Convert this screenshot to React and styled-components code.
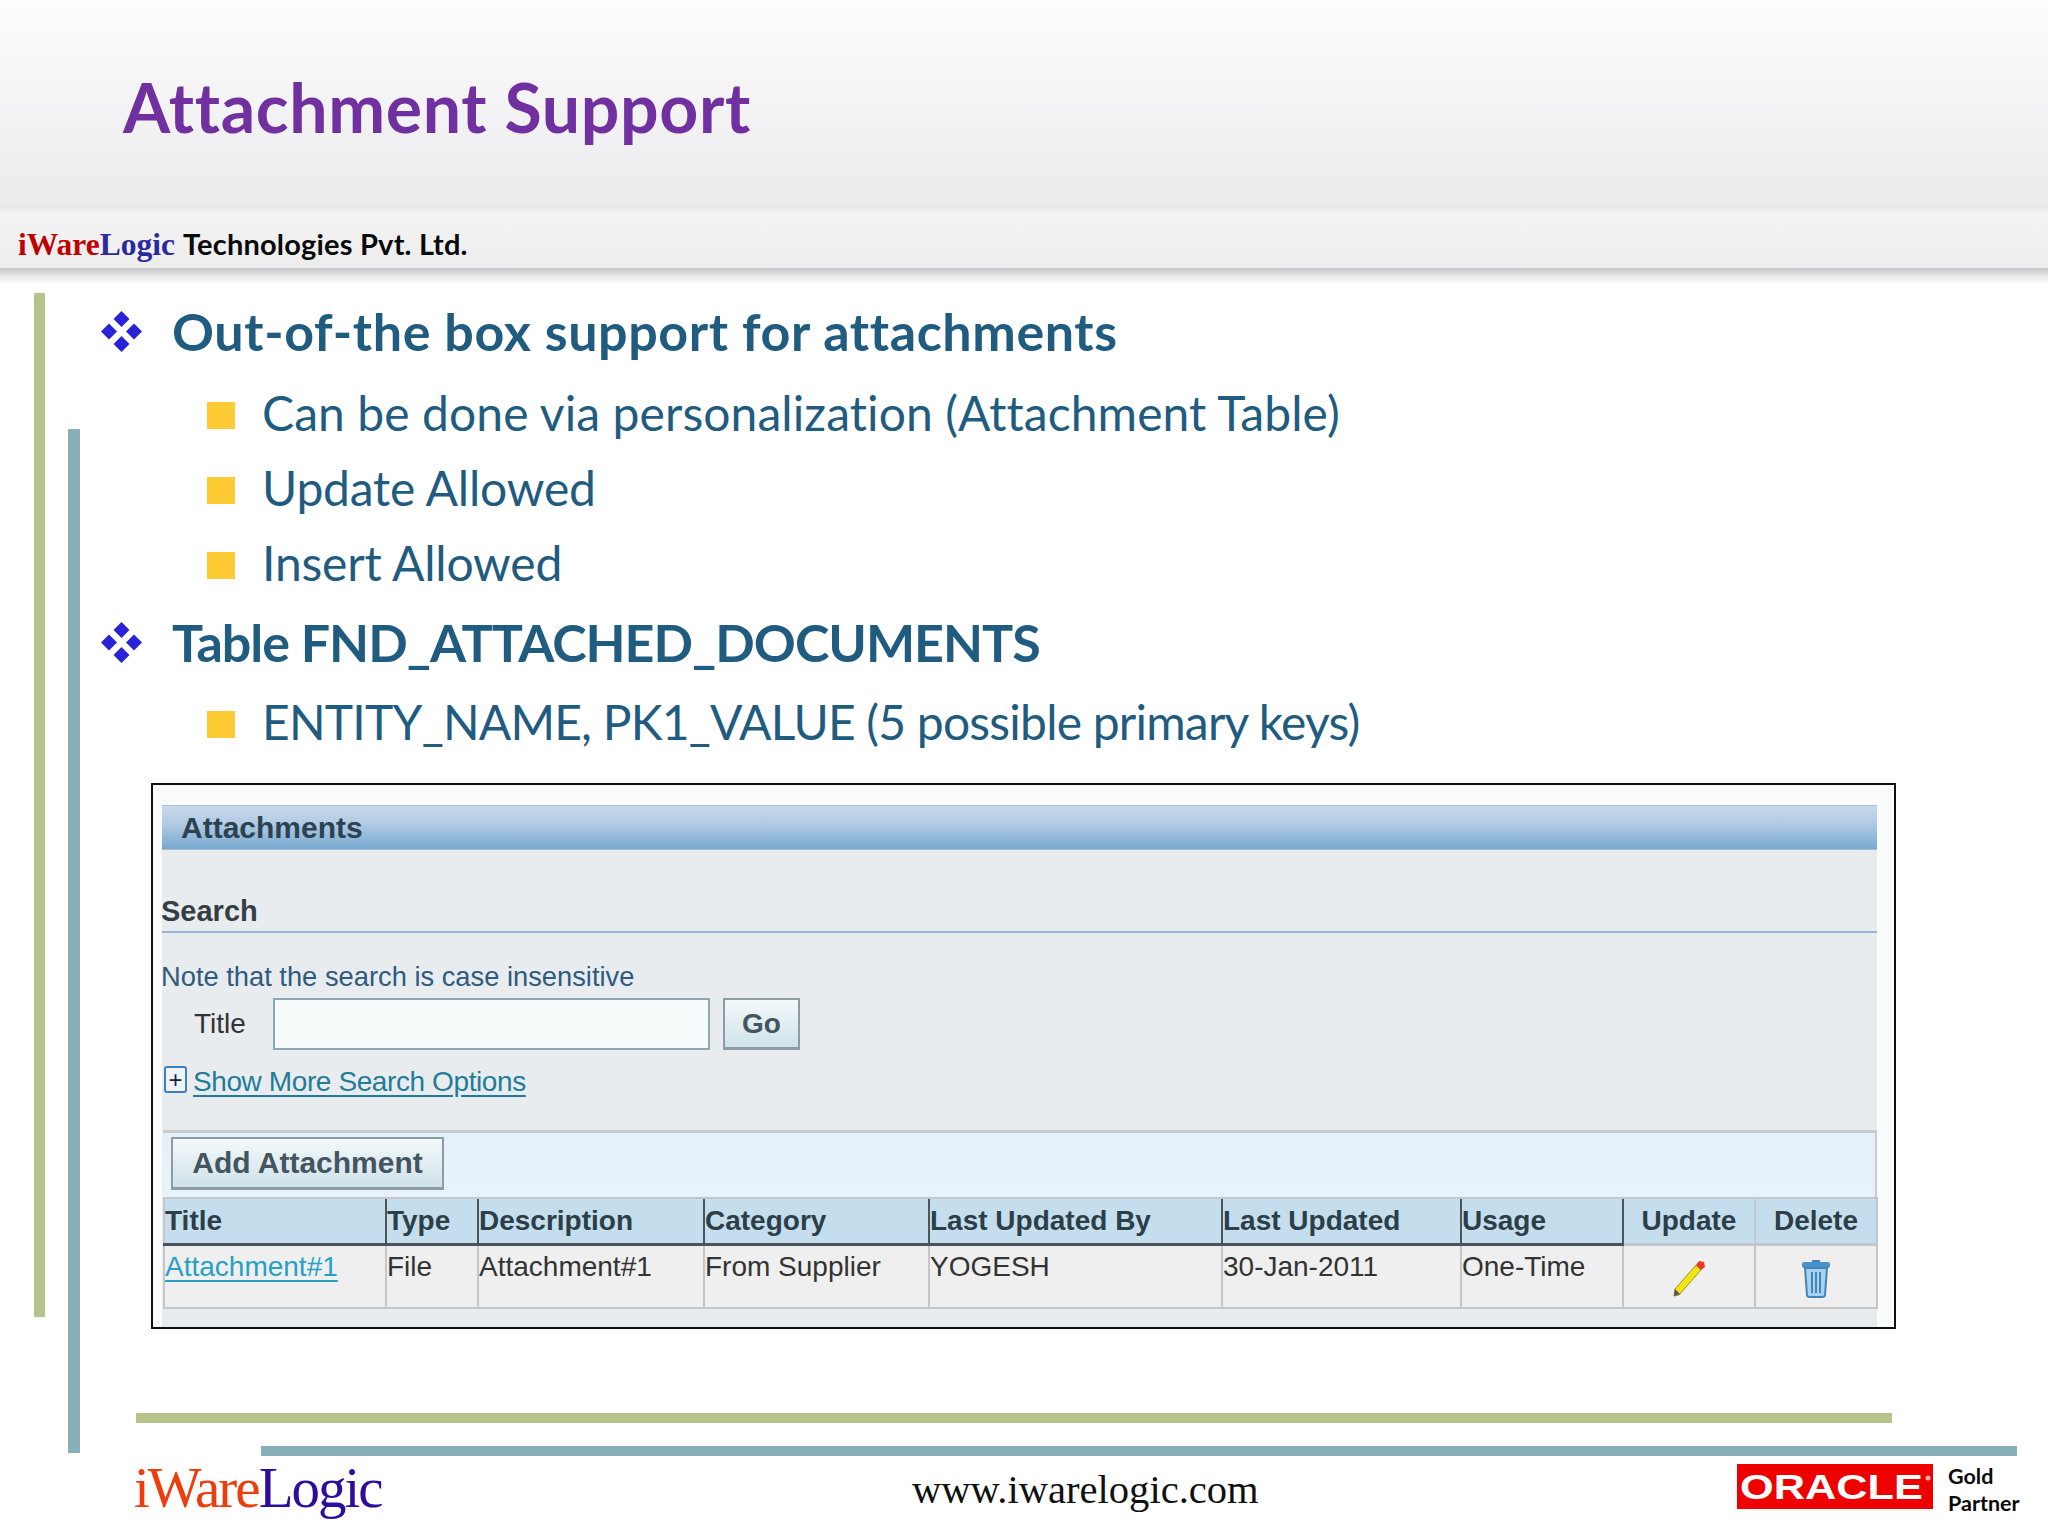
import React from 'react';
import styled, { createGlobalStyle } from 'styled-components';

const GlobalStyle = createGlobalStyle`
  html, body {
    margin: 0;
    padding: 0;
    background: #fff;
  }
`;

const SLIDE_FONT = '"Lato", "Open Sans", sans-serif';
const FORM_FONT = '"Liberation Sans", Arial, sans-serif';
const SERIF_FONT = '"Liberation Serif", "Times New Roman", serif';

const Slide = styled.div`
  width: 2048px;
  height: 1536px;
  overflow: hidden;
  display: flex;
  flex-direction: column;
  background: #fff;
`;

const TitleBand = styled.header`
  height: 205px;
  box-sizing: border-box;
  padding: 66px 0 0 123px;
  background: linear-gradient(#fdfdfd, #f6f6f7 35%, #ebebed);
`;

const Title = styled.h1`
  margin: 0;
  font: 700 68px/82px ${SLIDE_FONT};
  letter-spacing: 0.65px;
  color: #7030a0;
`;

const BrandStrip = styled.div`
  height: 63px;
  box-sizing: border-box;
  padding: 23px 0 0 18px;
  display: flex;
  gap: 8px;
  align-items: baseline;
  position: relative;
  background: linear-gradient(#e6e6e8, #f3f3f4 14%, #ededee);

  /* soft shadow band under the strip */
  &::after {
    content: '';
    position: absolute;
    left: 0;
    right: 0;
    top: 100%;
    height: 17px;
    background: linear-gradient(#c6c6c8, #e9e9ea 50%, #fff);
  }
`;

const BrandName = styled.span`
  font: 700 31.5px/32px ${SERIF_FONT};
  color: ${(p) => p.$color};
`;

const BrandWords = styled.span`
  font: 700 29px/32px ${SLIDE_FONT};
  letter-spacing: 0.2px;
  color: #0a0a0a;
`;

const Body = styled.div`
  flex: 1;
  display: flex;
  align-items: flex-start;
`;

const SideRule = styled.div`
  flex: none;
  width: ${(p) => p.$width}px;
  height: 1024px;
  margin-left: ${(p) => p.$left}px;
  margin-top: ${(p) => p.$top}px;
  background: ${(p) => p.$color};
`;

const Content = styled.main`
  flex: 1;
  min-width: 0;
  padding-top: 32px;
`;

const HeadItem = styled.div`
  height: 62px;
  margin: ${(p) => p.$top}px 0 ${(p) => p.$bottom}px;
  display: flex;
  align-items: center;
  padding-left: 21px;
  gap: 30px;
  font: 700 52px/62px ${SLIDE_FONT};
  letter-spacing: ${(p) => p.$spacing}px;
  color: #1f5c80;
`;

const SubItem = styled.div`
  height: 75px;
  display: flex;
  align-items: center;
  padding-left: 127px;
  gap: 27px;
  font: 400 48px/72px ${SLIDE_FONT};
  letter-spacing: ${(p) => p.$spacing || 0}px;
  color: #1f5c80;
`;

const Square = styled.span`
  flex: none;
  width: 28px;
  height: 27px;
  margin-top: 5px;
  background: #ffcb35;
`;

const Panel = styled.section`
  box-sizing: border-box;
  width: 1745px;
  height: 546px;
  margin: 24px 0 0 71px;
  border: 2px solid #111;
  padding: 20px 17px 0 9px;
  background: #fbfcfc;
`;

const PanelInner = styled.div`
  height: 522px;
  background: #e9ecef;
`;

const PanelBar = styled.div`
  height: 45px;
  box-sizing: border-box;
  padding-left: 19px;
  display: flex;
  align-items: center;
  border-top: 1px solid #a9c2dc;
  border-bottom: 1px solid #a3bdd4;
  background: linear-gradient(#c7d8ec, #b2cbe4 40%, #78a8d0);
  font: 700 30px/44px ${FORM_FONT};
  color: #2c4250;
`;

const SearchHead = styled.div`
  height: 83px;
  box-sizing: border-box;
  display: flex;
  align-items: flex-end;
  padding-bottom: 1px;
  border-bottom: 2px solid #92b6d8;
  font: 700 29px/38px ${FORM_FONT};
  text-indent: -1px;
  color: #333f44;
`;

const Note = styled.div`
  height: 65px;
  box-sizing: border-box;
  padding-top: 26px;
  font: 400 27.3px/36px ${FORM_FONT};
  text-indent: -1px;
  color: #2e5b80;
`;

const SearchRow = styled.div`
  height: 52px;
  display: flex;
  align-items: stretch;
`;

const FieldLabel = styled.label`
  width: 111px;
  box-sizing: border-box;
  padding-left: 32px;
  font: 400 28px/52px ${FORM_FONT};
  color: #333;
`;

const TextField = styled.input`
  box-sizing: border-box;
  width: 437px;
  height: 52px;
  padding: 0;
  border: 2px solid #8ea6bc;
  background: #f7fbfc;
`;

const Button = styled.button`
  box-sizing: border-box;
  height: ${(p) => p.$height}px;
  width: ${(p) => p.$width}px;
  margin-left: ${(p) => p.$left}px;
  padding: 0;
  border: 2px solid #8d9ba6;
  border-bottom-width: 3px;
  background: linear-gradient(#f4f9fa, #cfe2ea);
  font: 700 ${(p) => p.$size}px/1 ${FORM_FONT};
  color: #44555f;
`;

const MoreRow = styled.div`
  height: 80px;
  box-sizing: border-box;
  padding: 16px 0 0 2px;
  display: flex;
  gap: 6px;
  align-items: flex-start;
`;

const PlusBox = styled.span`
  flex: none;
  box-sizing: border-box;
  width: 23px;
  height: 27px;
  display: flex;
  align-items: center;
  justify-content: center;
  border: 2px solid #3f7fbe;
  border-radius: 3px;
  background: #eef4fa;
  font: 400 24px/1 ${FORM_FONT};
  color: #223;
`;

const MoreLink = styled.a`
  font: 400 28px/32px ${FORM_FONT};
  letter-spacing: -0.4px;
  color: #217d97;
  text-decoration: underline;
  text-underline-offset: 4px;
`;

const Toolbar = styled.div`
  height: 67px;
  box-sizing: border-box;
  margin-left: 1px;
  padding: 4px 0 0 8px;
  border-top: 3px solid #c8cbd0;
  border-right: 2px solid #c8cbd0;
  background: linear-gradient(#e6f0f9, #e8f2fb);
`;

const Table = styled.table`
  width: 1713px;
  margin-left: 1px;
  table-layout: fixed;
  border-collapse: collapse;
`;

const HeadCell = styled.th`
  height: 46px;
  box-sizing: border-box;
  padding: 0;
  text-align: ${(p) => (p.$center ? 'center' : 'left')};
  font: 700 28px/42px ${FORM_FONT};
  color: #2c3f48;
  background: #c5deee;
  border-top: 2px solid #c4c6cd;
  border-bottom: 3px solid ${(p) => (p.$center ? '#c4c6cd' : '#4b555e')};
  border-left: 2px solid ${(p) => (p.$light ? '#c4c6cd' : '#4b555e')};
  border-right: 0;
  &:first-child {
    border-left-color: #c4c6cd;
  }
  &:last-child {
    border-right: 2px solid #c4c6cd;
  }
`;

const Cell = styled.td`
  height: 64px;
  box-sizing: border-box;
  padding: 3px 0 0;
  vertical-align: ${(p) => (p.$center ? 'middle' : 'top')};
  text-align: ${(p) => (p.$center ? 'center' : 'left')};
  font: 400 28px/36px ${FORM_FONT};
  color: #333;
  background: #efefef;
  border: 2px solid #c4c6cc;
  border-top: 0;
`;

const RowLink = styled.a`
  color: #27a0c4;
  text-decoration: underline;
  text-underline-offset: 4px;
`;

const Icon = styled.svg`
  display: block;
  margin: ${(p) => p.$margin || '0 auto'};
`;

const Footer = styled.footer`
  display: flex;
  flex-direction: column;
`;

const FooterRule = styled.div`
  height: 10px;
  width: 1756px;
  margin-left: ${(p) => p.$left}px;
  margin-top: ${(p) => p.$top}px;
  background: ${(p) => p.$color};
`;

const FooterRow = styled.div`
  display: flex;
  align-items: flex-start;
  padding-left: 54px;
  margin-top: 1px;
`;

const LogoWord = styled.span`
  font: 400 57px/62px ${SERIF_FONT};
  letter-spacing: -2px;
  color: ${(p) => p.$color};
`;

const Logo = styled.div`
  width: 778px;
  flex: none;
  white-space: nowrap;
`;

const Website = styled.div`
  width: 825px;
  flex: none;
  margin-top: 10px;
  font: 400 40.6px/46px ${SERIF_FONT};
  color: #111;
`;

const OracleMark = styled.svg`
  flex: none;
  display: block;
  margin-top: 7px;
  background: #ee0000;
`;

const Partner = styled.div`
  margin: 6px 0 0 15px;
  font: 700 21.5px/27px ${SLIDE_FONT};
  color: #0a0a0a;
`;

const columns = [222, 92, 226, 225, 293, 239, 162, 132, 122];

const Diamonds = () => (
  <Icon $margin="0" width="41" height="41" viewBox="0 0 41 41" fill="#2a22d8">
    <path d="M20.5 0 28.5 8 20.5 16 12.5 8Z" />
    <path d="M8 12.5 16 20.5 8 28.5 0 20.5Z" />
    <path d="M33 12.5 41 20.5 33 28.5 25 20.5Z" />
    <path d="M20.5 25 28.5 33 20.5 41 12.5 33Z" />
  </Icon>
);

const Pencil = () => (
  <Icon width="34" height="38" viewBox="0 0 34 38">
    <path d="M7 36 2 37 3 30 24 6 29 11Z" fill="#f0e414" stroke="#9a9a20" strokeWidth="1" />
    <path d="M3 30 2 37 8 35Z" fill="#55555f" />
    <path d="M24 6 27 2 32 3 33 8 29 11Z" fill="#ee3a22" />
  </Icon>
);

const Trash = () => (
  <Icon width="30" height="40" viewBox="0 0 30 40">
    <path d="M11 2h8v3h-8z" fill="#3f86b8" />
    <rect x="1" y="4" width="28" height="6" rx="2" fill="#4a93c8" />
    <path d="M4 10h22l-2 27q0 2-3 2H9q-3 0-3-2Z" fill="#a8d2ee" stroke="#3f86b8" strokeWidth="2" />
    <path d="M11 14v21M15 14v21M19 14v21" stroke="#3f86b8" strokeWidth="2" />
  </Icon>
);

export default function App() {
  return (
    <Slide>
      <GlobalStyle />
      <TitleBand>
        <Title>Attachment Support</Title>
      </TitleBand>
      <BrandStrip>
        <span>
          <BrandName $color="#c00000">iWare</BrandName>
          <BrandName $color="#2a2a9c">Logic</BrandName>
        </span>
        <BrandWords>Technologies Pvt. Ltd.</BrandWords>
      </BrandStrip>
      <Body>
        <SideRule $left={34} $width={11} $top={25} $color="#b5c48c" />
        <SideRule $left={23} $width={12} $top={161} $color="#88b0bb" />
        <Content>
          <HeadItem $top={0} $bottom={13} $spacing={0.6}>
            <Diamonds />
            Out-of-the box support for attachments
          </HeadItem>
          <SubItem $spacing={0.08}>
            <Square />
            Can be done via personalization (Attachment Table)
          </SubItem>
          <SubItem $spacing={-0.2}>
            <Square />
            Update Allowed
          </SubItem>
          <SubItem $spacing={-0.2}>
            <Square />
            Insert Allowed
          </SubItem>
          <HeadItem $top={11} $bottom={11} $spacing={-1}>
            <Diamonds />
            Table FND_ATTACHED_DOCUMENTS
          </HeadItem>
          <SubItem $spacing={-0.8}>
            <Square />
            ENTITY_NAME, PK1_VALUE (5 possible primary keys)
          </SubItem>

          <Panel>
            <PanelInner>
              <PanelBar>Attachments</PanelBar>
              <SearchHead>Search</SearchHead>
              <Note>Note that the search is case insensitive</Note>
              <SearchRow>
                <FieldLabel>Title</FieldLabel>
                <TextField />
                <Button $left={13} $width={77} $height={52} $size={28}>Go</Button>
              </SearchRow>
              <MoreRow>
                <PlusBox>+</PlusBox>
                <MoreLink>Show More Search Options</MoreLink>
              </MoreRow>
              <Toolbar>
                <Button $left={0} $width={273} $height={53} $size={30}>Add Attachment</Button>
              </Toolbar>
              <Table>
                <colgroup>
                  {columns.map((w, i) => (
                    <col key={i} style={{ width: w }} />
                  ))}
                </colgroup>
                <thead>
                  <tr>
                    <HeadCell>Title</HeadCell>
                    <HeadCell>Type</HeadCell>
                    <HeadCell>Description</HeadCell>
                    <HeadCell>Category</HeadCell>
                    <HeadCell>Last Updated By</HeadCell>
                    <HeadCell>Last Updated</HeadCell>
                    <HeadCell>Usage</HeadCell>
                    <HeadCell $center>Update</HeadCell>
                    <HeadCell $center $light>Delete</HeadCell>
                  </tr>
                </thead>
                <tbody>
                  <tr>
                    <Cell><RowLink>Attachment#1</RowLink></Cell>
                    <Cell>File</Cell>
                    <Cell>Attachment#1</Cell>
                    <Cell>From Supplier</Cell>
                    <Cell>YOGESH</Cell>
                    <Cell>30-Jan-2011</Cell>
                    <Cell>One-Time</Cell>
                    <Cell $center><Pencil /></Cell>
                    <Cell $center><Trash /></Cell>
                  </tr>
                </tbody>
              </Table>
            </PanelInner>
          </Panel>

          <Footer>
            <FooterRule $left={56} $top={84} $color="#b5c48c" />
            <FooterRule $left={181} $top={23} $color="#88b0bb" />
            <FooterRow>
              <Logo>
                <LogoWord $color="#ee3c0c">iWare</LogoWord>
                <LogoWord $color="#2f0c9c">Logic</LogoWord>
              </Logo>
              <Website>www.iwarelogic.com</Website>
              <OracleMark width="196" height="45" viewBox="0 0 196 45">
                <text
                  x="3"
                  y="35"
                  textLength="183"
                  lengthAdjust="spacingAndGlyphs"
                  fontFamily="Liberation Sans, Arial, sans-serif"
                  fontSize="35"
                  fontWeight="700"
                  fill="#fff"
                >
                  ORACLE
                </text>
                <circle cx="191" cy="14" r="2.5" fill="#f7b0b0" />
              </OracleMark>
              <Partner>
                Gold
                <br />
                Partner
              </Partner>
            </FooterRow>
          </Footer>
        </Content>
      </Body>
    </Slide>
  );
}
